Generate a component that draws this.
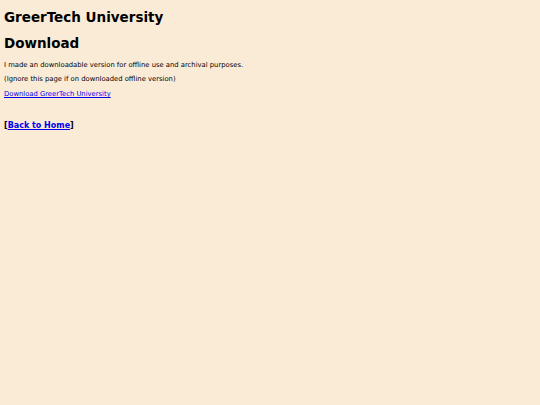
export default function App() {
  return (
    <div className="min-h-[405px] w-full bg-[#faebd7] px-[4px] pt-[9px] text-black [font-family:'DejaVu_Sans',Verdana,sans-serif]">
      <h1 className="text-[13.5px] font-bold leading-[16px]">GreerTech University</h1>
      <h2 className="mt-[10px] text-[13.5px] font-bold leading-[16px]">Download</h2>
      <p className="mt-[10px] text-[6.8px] leading-[9px]">
        I made an downloadable version for offline use and archival purposes.
      </p>
      <p className="mt-[5px] text-[6.8px] leading-[9px]">(Ignore this page if on downloaded offline version)</p>
      <p className="mt-[6px] text-[6.8px] leading-[9px]">
        <a href="#" className="text-[#0000ee] underline">
          Download GreerTech University
        </a>
      </p>
      <p className="mt-[21px] text-[8px] font-bold leading-[11px]">
        [
        <a href="#" className="text-[#0000ee] underline">
          Back to Home
        </a>
        ]
      </p>
    </div>
  );
}
